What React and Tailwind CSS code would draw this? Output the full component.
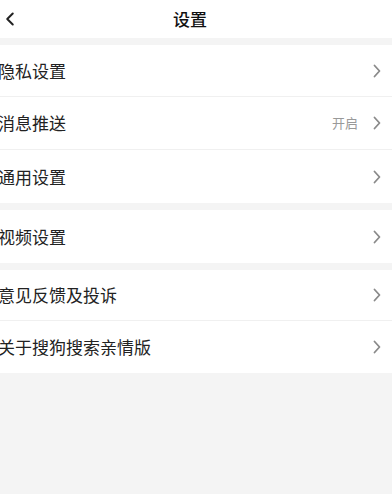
import { ChevronLeft } from "lucide-react";

const font = { fontFamily: '"Noto Sans CJK SC", "Noto Sans", sans-serif' };

function Arrow() {
  return (
    <svg width="10" height="16" viewBox="0 0 10 16" className="shrink-0">
      <path d="M2.5 2.5 L7.5 8 L2.5 13.5" fill="none" stroke="#8a8a8a" strokeWidth="1.8" strokeLinecap="round" strokeLinejoin="round" />
    </svg>
  );
}

function Row({ label, value, last, h }) {
  return (
    <div className={`flex items-center pr-[10px] ${h} ${last ? "" : "border-b border-[#f0f0f0]"}`}>
      <span className="flex-1 -ml-[2px] text-[17px] text-[#222]">{label}</span>
      {value && <span className="mr-[14px] text-[13px] text-[#999]">{value}</span>}
      <Arrow />
    </div>
  );
}

function Group({ items }) {
  return (
    <div className="bg-white">
      {items.map((it, i) => (
        <Row key={it.label} {...it} last={i === items.length - 1} />
      ))}
    </div>
  );
}

export default function App() {
  return (
    <div className="min-h-[494px] bg-[#f4f4f4] flex flex-col gap-[7px]" style={font}>
      <div className="relative h-[38px] bg-white flex items-center justify-center">
        <ChevronLeft className="absolute left-[-1px] top-[8px]" size={22} strokeWidth={2.2} color="#222" />
        <span className="text-[17px] font-medium text-[#111] pr-[12px]">设置</span>
      </div>
      <Group
        items={[
          { label: "隐私设置", h: "h-[52px]" },
          { label: "消息推送", value: "开启", h: "h-[53px]" },
          { label: "通用设置", h: "h-[53px]" },
        ]}
      />
      <Group items={[{ label: "视频设置", h: "h-[53px]" }]} />
      <Group
        items={[
          { label: "意见反馈及投诉", h: "h-[51px]" },
          { label: "关于搜狗搜索亲情版", h: "h-[52px]" },
        ]}
      />
    </div>
  );
}
